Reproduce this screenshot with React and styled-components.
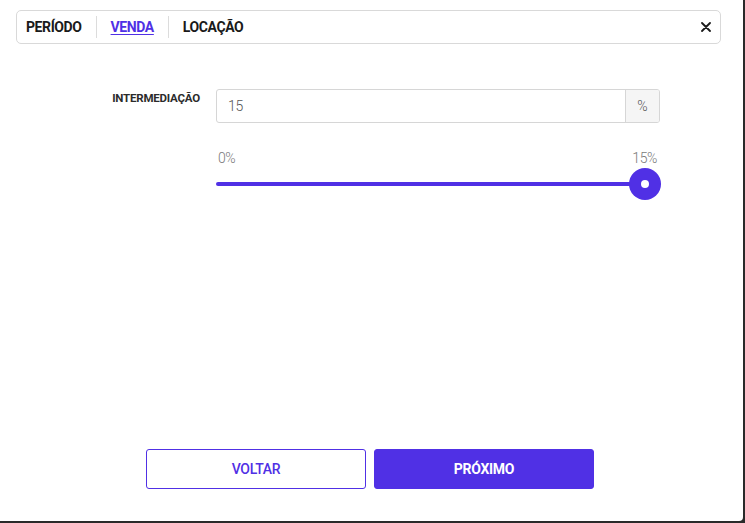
import React from "react";
import styled, { createGlobalStyle } from "styled-components";

const purple = "#5030e5";

const Global = createGlobalStyle`
  html, body { margin: 0; padding: 0; background: #2a2a2a; }
  body { font-family: Roboto, "Liberation Sans", sans-serif; }
  * { box-sizing: border-box; }
`;

const Modal = styled.div`
  width: 743px;
  height: 521px;
  background: #fff;
  border-bottom-right-radius: 4px;
  padding: 10px 22px 32px 16px;
  display: flex;
  flex-direction: column;
`;

const TabBar = styled.div`
  height: 34px;
  border: 1px solid #d9d9d9;
  border-radius: 5px;
  display: flex;
  align-items: center;
  padding: 0 9px 0 9px;
`;

const Tab = styled.span`
  font-size: 14px;
  font-weight: 700;
  letter-spacing: -0.4px;
  color: ${(p) => (p.$active ? purple : "#1a1a1a")};
  text-decoration: ${(p) => (p.$active ? "underline" : "none")};
  text-underline-offset: 2px;
  padding: 0 14px;
  &:first-child { padding-left: 0; }
`;

const Sep = styled.span`
  width: 1px;
  height: 22px;
  background: #dcdcdc;
`;

const Spacer = styled.div`flex: 1;`;

const Close = styled.svg`
  width: 10px;
  height: 10px;
`;

const Body = styled.div`
  flex: 1;
  padding-top: 45px;
  display: grid;
  grid-template-columns: 184px 444px;
  column-gap: 16px;
  align-content: start;
`;

const Label = styled.div`
  font-size: 11.5px;
  font-weight: 700;
  letter-spacing: -0.2px;
  color: #2b2b2b;
  text-align: right;
  padding-top: 2px;
`;

const InputGroup = styled.div`
  display: flex;
  height: 34px;
  border: 1px solid #d6d6d6;
  border-radius: 3px;
  overflow: hidden;
`;

const Input = styled.div`
  flex: 1;
  padding: 0 11px;
  display: flex;
  align-items: center;
  font-size: 14px;
  font-weight: 300;
  color: #555;
  letter-spacing: -0.3px;
`;

const Addon = styled.div`
  width: 34px;
  border-left: 1px solid #d6d6d6;
  background: #f5f5f5;
  display: flex;
  align-items: center;
  justify-content: center;
  font-size: 14px;
  font-weight: 300;
  color: #555;
`;

const SliderWrap = styled.div`
  grid-column: 2;
  margin-top: 27px;
`;

const SliderLabels = styled.div`
  display: flex;
  justify-content: space-between;
  font-size: 14px;
  font-weight: 300;
  color: #7a7a7a;
  letter-spacing: -0.4px;
  padding: 0 3px 0 2px;
`;

const Track = styled.div`
  position: relative;
  margin-top: 16px;
  height: 4px;
  width: 429px;
  border-radius: 2px;
  background: ${purple};
`;

const Thumb = styled.div`
  position: absolute;
  right: -16px;
  top: -14px;
  width: 32px;
  height: 32px;
  border-radius: 50%;
  background: ${purple};
  display: flex;
  align-items: center;
  justify-content: center;
  &::after {
    content: "";
    width: 8px;
    height: 8px;
    border-radius: 50%;
    background: #fff;
  }
`;

const Footer = styled.div`
  display: flex;
  justify-content: flex-start;
  gap: 8px;
  padding-left: 130px;
`;

const Button = styled.button`
  width: 220px;
  height: 40px;
  border-radius: 3px;
  border: 1px solid ${purple};
  background: ${(p) => (p.$primary ? purple : "#fff")};
  color: ${(p) => (p.$primary ? "#fff" : purple)};
  font-family: Roboto, "Liberation Sans", sans-serif;
  font-size: 14px;
  font-weight: ${(p) => (p.$primary ? 700 : 500)};
  letter-spacing: -0.3px;
`;

export default function App() {
  return (
    <>
      <Global />
      <Modal>
        <TabBar>
          <Tab>PERÍODO</Tab>
          <Sep />
          <Tab $active>VENDA</Tab>
          <Sep />
          <Tab>LOCAÇÃO</Tab>
          <Spacer />
          <Close viewBox="0 0 10 10">
            <path d="M1 1L9 9M9 1L1 9" stroke="#1a1a1a" strokeWidth="1.8" strokeLinecap="round" />
          </Close>
        </TabBar>
        <Body>
          <Label>INTERMEDIAÇÃO</Label>
          <InputGroup>
            <Input>15</Input>
            <Addon>%</Addon>
          </InputGroup>
          <SliderWrap>
            <SliderLabels>
              <span>0%</span>
              <span>15%</span>
            </SliderLabels>
            <Track>
              <Thumb />
            </Track>
          </SliderWrap>
        </Body>
        <Footer>
          <Button>VOLTAR</Button>
          <Button $primary>PRÓXIMO</Button>
        </Footer>
      </Modal>
    </>
  );
}
